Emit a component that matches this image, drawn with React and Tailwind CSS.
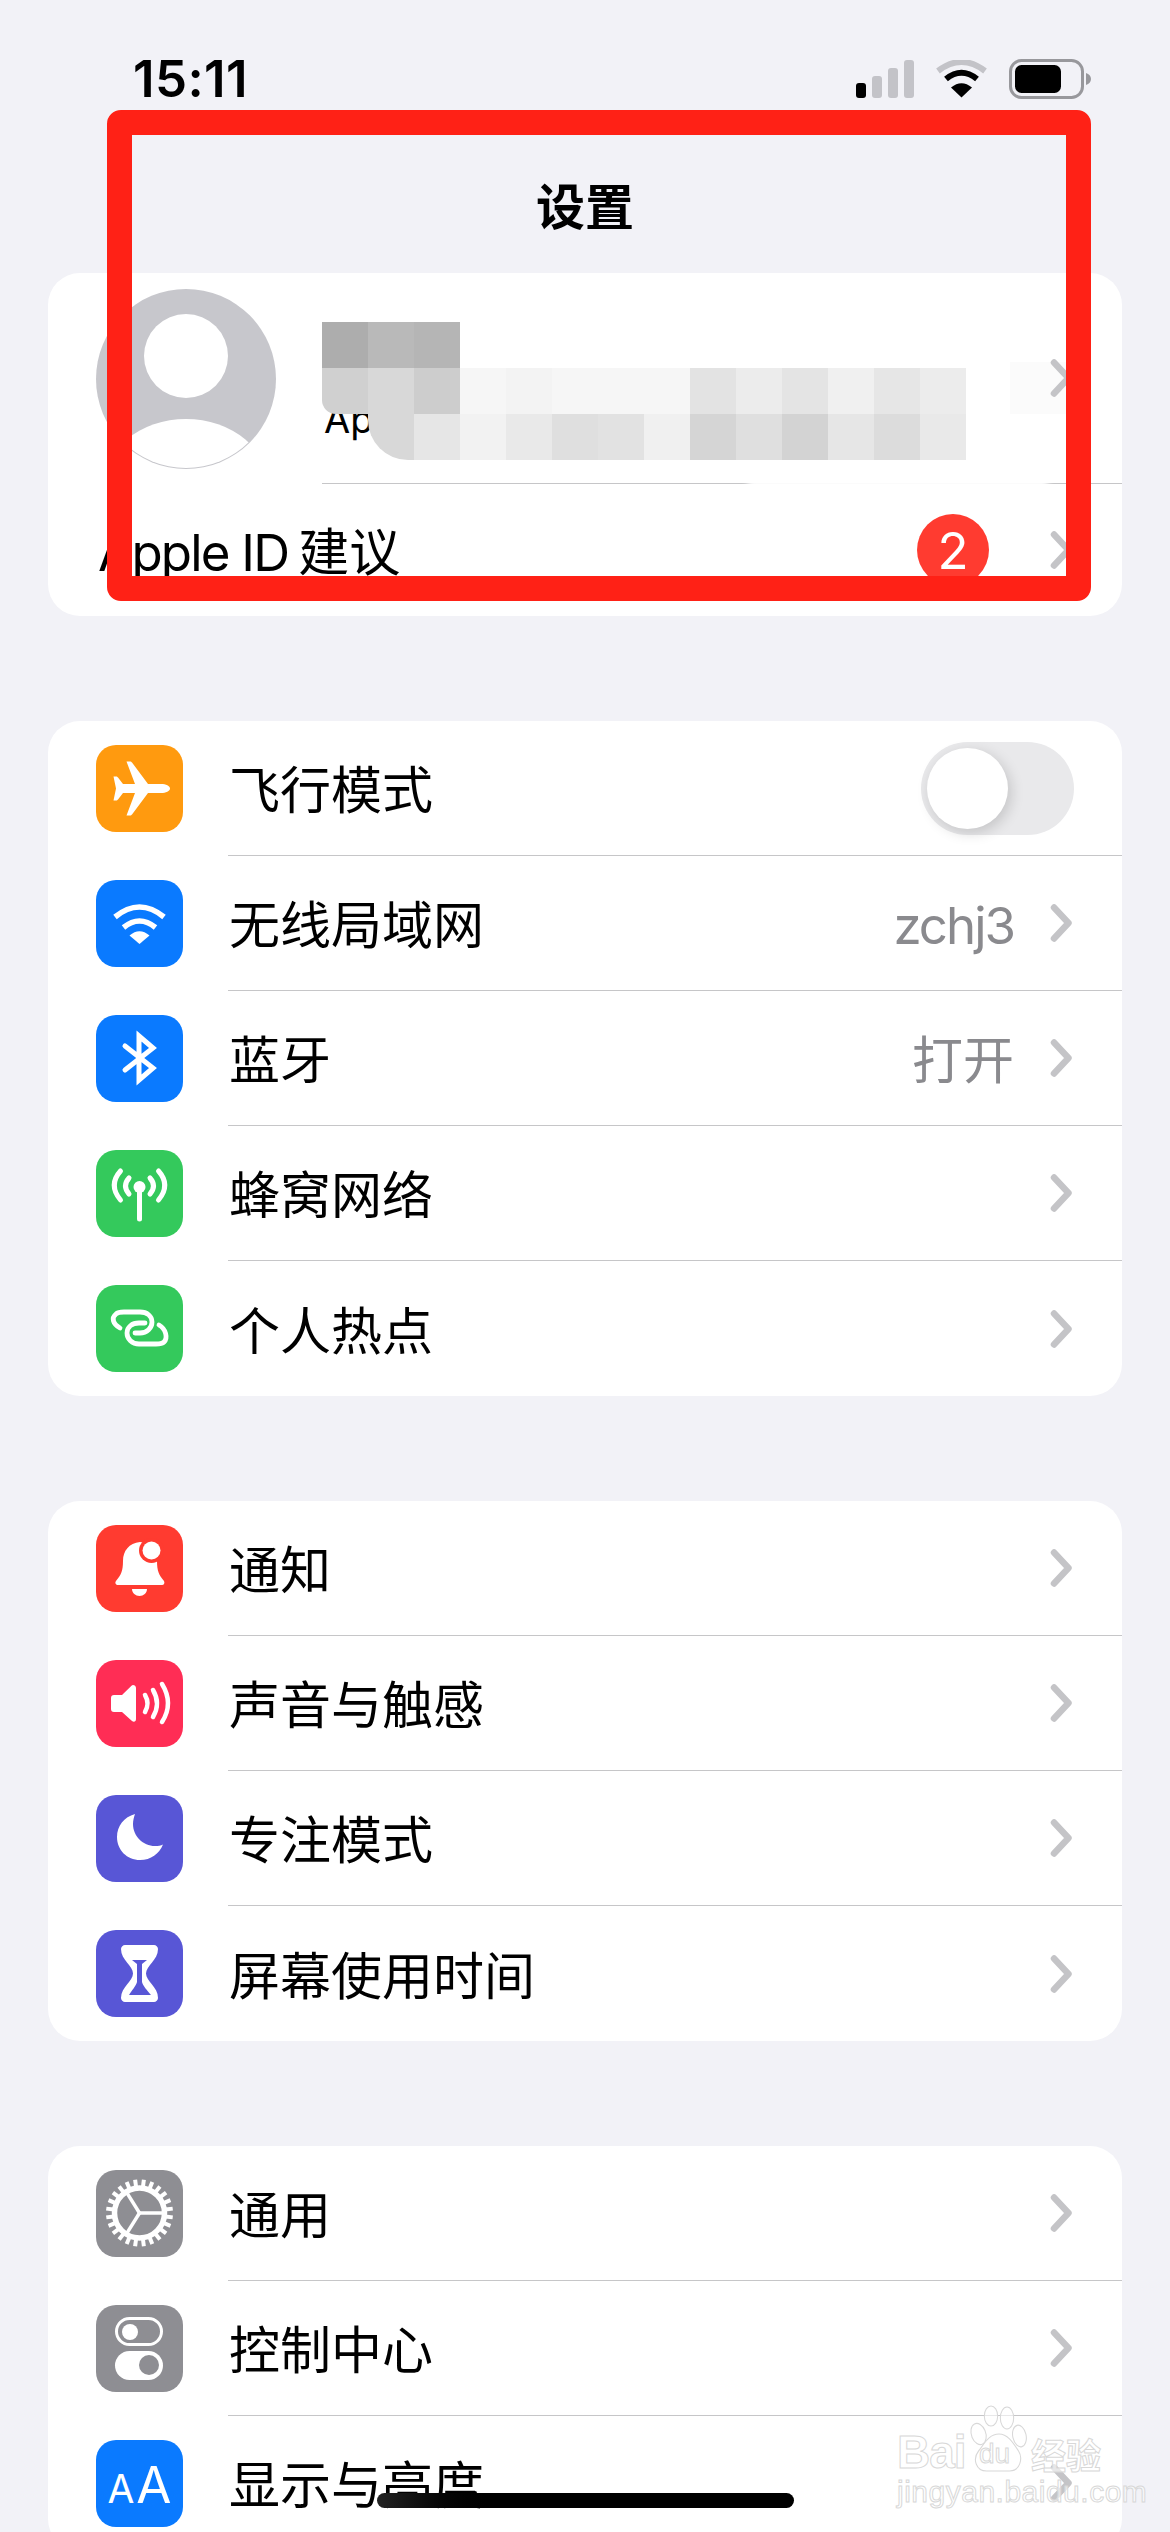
const FONT = "[font-family:Inter,'Noto_Sans_CJK_SC',sans-serif]";

function Chevron() {
  return (
    <svg width="23" height="38" viewBox="0 0 23 38" className="shrink-0">
      <path d="M4 3.500 L18.500 19 L4 34.500" fill="none" stroke="#c4c4c7" strokeWidth="6.500" strokeLinecap="round" strokeLinejoin="round" />
    </svg>
  );
}

function Tile({ bg, children }) {
  return <div className={`w-[87px] h-[87px] rounded-[20px] shrink-0 flex items-center justify-center ${bg}`}>{children}</div>;
}

function Glyph({ children }) {
  return <svg width="87" height="87" viewBox="0 0 87 87">{children}</svg>;
}

const Plane = () => (
  <Glyph>
    <path fill="#fff" d="M74 43.500c0-2.500-4-4.500-9-4.500H52L36 17.500c-.5-.5-1-1-2-1h-3.500L39 39H27l-5-6.500c-.5-.5-1-1-2-1h-2.500L20 43.500l-2.500 12H20c1 0 1.500-.5 2-1l5-6.500h12l-8.500 22.500H34c1 0 1.500-.5 2-1L52 48h13c5 0 9-2 9-4.500Z" />
  </Glyph>
);
const Wifi = () => (
  <Glyph>
    <path fill="#fff" d="M43.500 64 L33.500 55.500 Q43.500 47 53.500 55.500 Z" />
    <path fill="none" stroke="#fff" strokeWidth="5.500" d="M27.500 47.500 Q43.500 34.500 59.500 47.500" />
    <path fill="none" stroke="#fff" strokeWidth="5.500" d="M19 37 Q43.500 17 68 37" />
  </Glyph>
);
const Bluetooth = () => (
  <Glyph>
    <path fill="none" stroke="#fff" strokeWidth="5" strokeLinejoin="miter" strokeLinecap="round" d="M29 31 L57 53 L43 65 V21 L57 33 L29 55" />
  </Glyph>
);
const Antenna = () => (
  <Glyph>
    <circle cx="43.500" cy="37" r="6" fill="#fff" />
    <path stroke="#fff" strokeWidth="5" strokeLinecap="round" d="M43.500 38 V69" />
    <g fill="none" stroke="#fff" strokeWidth="5" strokeLinecap="round">
      <path d="M24.500 21 Q12 35 24.500 50" />
      <path d="M33 28 Q26 36 33 44" />
      <path d="M62.500 21 Q75 35 62.500 50" />
      <path d="M54 28 Q61 36 54 44" />
    </g>
  </Glyph>
);
const Link = () => (
  <Glyph>
    <g fill="none" stroke="#fff" strokeWidth="4.800" strokeLinecap="round">
      <path d="M24 43C17 39 15 33 20 29C22 27 25 27 28 27H44C51 27 56 31 56 37C56 43 51 48 44 48H39" />
      <path d="M49 38H43C36 38 31 42 31 48C31 54 36 59 43 59H60C63 59 66 59 68 57C72 53 70 44 63 40" />
    </g>
  </Glyph>
);
const Bell = () => (
  <Glyph>
    <path fill="#fff" d="M44 17C33 18 27 26 27 36C27 46 25 50 20 56C18.500 58 20 60 22 60H66C68 60 69 58 68 56C63 50 61 46 61 36C61 26 55 18 44 17Z" />
    <path fill="#fff" d="M36 64H51C51 68 47.500 71 43.500 71C39.500 71 36 68 36 64Z" />
    <circle cx="55.500" cy="25.500" r="12.500" fill="#ff3b30" />
    <circle cx="55.500" cy="25.500" r="9" fill="#fff" />
  </Glyph>
);
const Sound = () => (
  <Glyph>
    <path fill="#fff" d="M37 25C38.500 25 40 26 40 28V59C40 61.500 38 62.500 36 61L26 52H18C16 52 15 51 15 49V38C15 36 16 35 18 35H26L35.500 25.800C36 25.300 36.500 25 37 25Z" />
    <g fill="none" stroke="#fff" strokeWidth="4.500" strokeLinecap="round">
      <path d="M49 35 Q54 43.500 49 52" />
      <path d="M57 30 Q65 43.500 57 57" />
      <path d="M66 24 Q78 43.500 66 62" />
    </g>
  </Glyph>
);
const Moon = () => (
  <Glyph>
    <path fill="#fff" d="M39 19C28 22 21 31 21 42C21 55 31 65 44 65C55 65 63 59 67 49.500C65 50.500 62 51 59 51C47 51 37 41 37 29C37 25 38 22 39 19Z" />
  </Glyph>
);
const Hourglass = () => (
  <Glyph>
    <path fill="#fff" d="M29 15H58C60 15 62 17 62 19C62 30 50 36 50 43.500C50 51 62 57 62 68C62 70 60 72 58 72H29C27 72 25 70 25 68C25 57 37 51 37 43.500C37 36 25 30 25 19C25 17 27 15 29 15Z" />
    <path fill="#5856d6" d="M36 30H51L46 34V52C47 56 51 60 55 65H33C36 60 40 56 41 52V34Z" />
  </Glyph>
);
const teeth = Array.from({ length: 24 }, (_, i) => ((i * 15 + 7.5) * Math.PI) / 180);
const spokes = [-122, 0, 122].map((d) => (d * Math.PI) / 180);
const Gear = () => (
  <Glyph>
    <circle cx="43.500" cy="43" r="25" fill="none" stroke="#fff" strokeWidth="5.500" />
    {teeth.map((a, i) => (
      <line key={i} x1={43.5 + 26 * Math.cos(a)} y1={43 + 26 * Math.sin(a)} x2={43.5 + 33.5 * Math.cos(a)} y2={43 + 33.5 * Math.sin(a)} stroke="#fff" strokeWidth="4" />
    ))}
    {spokes.map((a, i) => (
      <line key={i} x1="43.500" y1="43" x2={43.5 + 24 * Math.cos(a)} y2={43 + 24 * Math.sin(a)} stroke="#fff" strokeWidth="3.500" />
    ))}
  </Glyph>
);
const Toggles = () => (
  <Glyph>
    <rect x="20.500" y="13.500" width="45" height="26" rx="13" fill="none" stroke="#fff" strokeWidth="3" />
    <circle cx="34" cy="27" r="8" fill="#fff" />
    <rect x="19" y="46" width="48" height="29" rx="14.500" fill="#fff" />
    <circle cx="53" cy="60" r="10" fill="#8e8e93" />
  </Glyph>
);
const TextSize = () => (
  <div className="flex items-baseline gap-[2px] text-white font-normal mt-[2px] [font-family:Inter,sans-serif]">
    <span className="text-[39px] leading-none">A</span>
    <span className="text-[51px] leading-none">A</span>
  </div>
);

function Row({ tile, label, value, toggle, last }) {
  return (
    <div className="flex items-center pl-[48px] h-[135px]">
      {tile}
      <div className={`ml-[45px] flex-1 h-full flex items-center pr-[49px] ${last ? "" : "border-b-[1.5px] border-[#c6c6c8]"}`}>
        <span className="text-[51px] leading-none text-black mt-[5px] ml-[1px]">{label}</span>
        <div className="ml-auto flex items-center gap-[36px]">
          {value && <span className="text-[51px] leading-none text-[#8a8a8e] mt-[5px]">{value}</span>}
          {toggle ? (
            <div className="w-[153px] h-[93px] rounded-full bg-[#e9e9eb] p-[6px] mr-[-1px]">
              <div className="w-[81px] h-[81px] rounded-full bg-white shadow-[3px_4px_14px_rgba(0,0,0,0.16)]" />
            </div>
          ) : (
            <Chevron />
          )}
        </div>
      </div>
    </div>
  );
}

function Card({ children }) {
  return <div className="mx-[48px] mb-[105px] bg-white rounded-[32px] relative">{children}</div>;
}

const mosaic = [
  ["#adadad", "#b9b9b9", "#b5b5b5", null, null, null, null, null, null, null, null, null, null, null],
  ["#d0d0d0", "#d8d8d8", "#cdcdcd", "#f6f6f6", "#f3f3f3", "#f6f6f6", "#f6f6f6", "#f6f6f6", "#e3e3e3", "#ececec", "#e4e4e4", "#f0f0f0", "#e6e6e6", "#ececec"],
  [null, "#d8d8d8", "#e6e6e6", "#f2f2f2", "#e9e9e9", "#dfdfdf", "#e2e2e2", "#f0f0f0", "#d5d5d5", "#dfdfdf", "#d3d3d3", "#e6e6e6", "#dcdcdc", "#e9e9e9"],
];

function Mosaic() {
  return (
    <div className="absolute left-[274px] top-[49px] grid grid-cols-[repeat(14,46px)] auto-rows-[46px]">
      {mosaic.flat().map((c, i) => (
        <div
          key={i}
          className={i === 14 ? "rounded-bl-[14px]" : i === 29 ? "rounded-bl-[40px]" : ""}
          style={{ backgroundColor: c || "transparent" }}
        />
      ))}
    </div>
  );
}

function Watermark() {
  const outline = "text-white/60 [-webkit-text-stroke:1px_#d8d8d8] [font-family:'Liberation_Sans',sans-serif]";
  return (
    <div className="absolute left-[897px] top-[2405px] w-[214px] h-[105px] flex flex-col items-start">
      <div className="flex items-end h-[68px] whitespace-nowrap">
        <span className={`w-[70px] shrink-0 text-[46px] leading-[42px] font-bold tracking-[-1px] ${outline}`}>Bai</span>
        <div className="relative w-[64px] h-[68px] shrink-0">
          <svg width="64" height="68" viewBox="0 0 72 68" preserveAspectRatio="none" className="absolute left-0 top-0">
            <g fill="#fff" fillOpacity="0.6" stroke="#d8d8d8" strokeWidth="1.200">
              <ellipse cx="13" cy="29" rx="8" ry="11" transform="rotate(-25 13 29)" />
              <ellipse cx="27" cy="11" rx="7.500" ry="10" />
              <ellipse cx="45" cy="13" rx="7.500" ry="11" />
              <ellipse cx="59" cy="31" rx="7.500" ry="11" transform="rotate(-15 59 31)" />
              <path d="M36 29C46 29 52 38 58 46C63 53 60 66 48 66H22C10 66 6 54 13 46C20 38 25 29 36 29Z" />
            </g>
          </svg>
          <span className={`absolute left-[12px] bottom-[5px] text-[28px] leading-none ${outline}`}>du</span>
        </div>
        <span className="shrink-0 text-[35px] leading-[38px] font-bold text-white/60 [-webkit-text-stroke:1px_#d8d8d8] [font-family:'Noto_Sans_CJK_SC',sans-serif]">经验</span>
      </div>
      <span className={`text-[30px] leading-[34px] mt-[2px] whitespace-nowrap tracking-[0.5px] ${outline}`}>jingyan.baidu.com</span>
    </div>
  );
}

export default function App() {
  return (
    <div className={`relative w-[1170px] h-[2532px] overflow-hidden bg-[#f2f2f7] ${FONT}`}>
      <div className="h-[45px] mt-[56px] flex items-center justify-between pl-[133px] pr-[79px]">
        <span className="text-[51px] leading-none font-semibold text-black tracking-[0.4px]">15:11</span>
        <div className="flex items-center gap-[22px]">
          <svg width="58" height="38" viewBox="0 0 58 38">
            <rect x="0" y="23" width="10" height="15" rx="3" fill="#000" />
            <rect x="16" y="16" width="10" height="22" rx="3" fill="#c3c3c8" />
            <rect x="32" y="8" width="10" height="30" rx="3" fill="#c3c3c8" />
            <rect x="48" y="0" width="10" height="38" rx="3" fill="#c3c3c8" />
          </svg>
          <svg width="51" height="38" viewBox="0 0 51 38">
            <path fill="#000" d="M25.500 37.500 L15 27.500 Q25.500 19 36 27.500 Z" />
            <path fill="none" stroke="#000" strokeWidth="6" d="M10 19 Q25.500 6.500 41 19" />
            <path fill="none" stroke="#c3c3c8" strokeWidth="6" d="M2 11 Q25.500 -7 49 11" />
          </svg>
          <svg width="82" height="40" viewBox="0 0 82 40">
            <rect x="1.500" y="1.500" width="72" height="37" rx="11" fill="none" stroke="#98989c" strokeWidth="3" />
            <rect x="6" y="6" width="46" height="28" rx="6.500" fill="#000" />
            <path d="M77 14 C80 15 82 17 82 20 C82 23 80 25 77 26 Z" fill="#98989c" />
          </svg>
        </div>
      </div>

      <div className="h-[60px] mt-[76px] mb-[36px] flex items-center justify-center">
        <span className="text-[49px] leading-none font-semibold text-black">设置</span>
      </div>

      <Card>
        <div className="absolute left-[962px] top-[89px] w-[56px] h-[52px] bg-[#fbfbfb]" />
        <div className="relative h-[210px] flex items-start pl-[48px] pr-[49px]">
          <svg width="180" height="180" viewBox="0 0 180 180" className="mt-[16px] shrink-0">
            <defs>
              <clipPath id="avatarClip">
                <circle cx="90" cy="90" r="89" />
              </clipPath>
            </defs>
            <circle cx="90" cy="90" r="90" fill="#c7c7cc" />
            <g clipPath="url(#avatarClip)">
              <circle cx="90" cy="67" r="42" fill="#fff" />
              <ellipse cx="90" cy="200" rx="84" ry="70" fill="#fff" />
            </g>
          </svg>
          <span className="ml-[48px] mt-[127px] text-[38px] leading-none text-black">Ap</span>
          <div className="ml-auto self-center">
            <Chevron />
          </div>
        </div>
        <Mosaic />
        <div className="ml-[274px] border-b-[1.5px] border-[#c6c6c8]" />
        <div className="absolute left-[700px] top-[203px] w-[300px] h-[12px] bg-white blur-[3px]" />
        <div className="h-[132px] flex items-center pl-[50px] pr-[49px]">
          <span className="text-[51px] leading-none text-black mt-[4px] flex gap-[10px]">
            <span className="tracking-[-1.800px]">Apple ID</span>
            <span>建议</span>
          </span>
          <div className="ml-auto flex items-center gap-[61px]">
            <div className="w-[72px] h-[72px] rounded-full bg-[#ff3b30] flex items-center justify-center text-white text-[51px] leading-none">2</div>
            <Chevron />
          </div>
        </div>
      </Card>

      <Card>
        <Row tile={<Tile bg="bg-[#ff9a0f]"><Plane /></Tile>} label="飞行模式" toggle />
        <Row tile={<Tile bg="bg-[#0a7aff]"><Wifi /></Tile>} label="无线局域网" value={<span className="tracking-[-2px]">zchj3</span>} />
        <Row tile={<Tile bg="bg-[#0a7aff]"><Bluetooth /></Tile>} label="蓝牙" value="打开" />
        <Row tile={<Tile bg="bg-[#34c95c]"><Antenna /></Tile>} label="蜂窝网络" />
        <Row tile={<Tile bg="bg-[#34c95c]"><Link /></Tile>} label="个人热点" last />
      </Card>

      <Card>
        <Row tile={<Tile bg="bg-[#ff3b30]"><Bell /></Tile>} label="通知" />
        <Row tile={<Tile bg="bg-[#ff2d55]"><Sound /></Tile>} label="声音与触感" />
        <Row tile={<Tile bg="bg-[#5856d6]"><Moon /></Tile>} label="专注模式" />
        <Row tile={<Tile bg="bg-[#5856d6]"><Hourglass /></Tile>} label="屏幕使用时间" last />
      </Card>

      <Card>
        <Row tile={<Tile bg="bg-[#8e8e93]"><Gear /></Tile>} label="通用" />
        <Row tile={<Tile bg="bg-[#8e8e93]"><Toggles /></Tile>} label="控制中心" />
        <Row tile={<Tile bg="bg-[#0a7aff]"><TextSize /></Tile>} label="显示与亮度" />
      </Card>

      <div className="absolute left-[377px] top-[2493px] w-[417px] h-[15px] rounded-full bg-linear-to-r from-[#222222] via-black via-[30%] to-black" />
      <Watermark />
      <div className="absolute left-[107px] top-[110px] w-[984px] h-[491px] border-[25px] border-[#ff2116] rounded-[14px]" />
    </div>
  );
}
